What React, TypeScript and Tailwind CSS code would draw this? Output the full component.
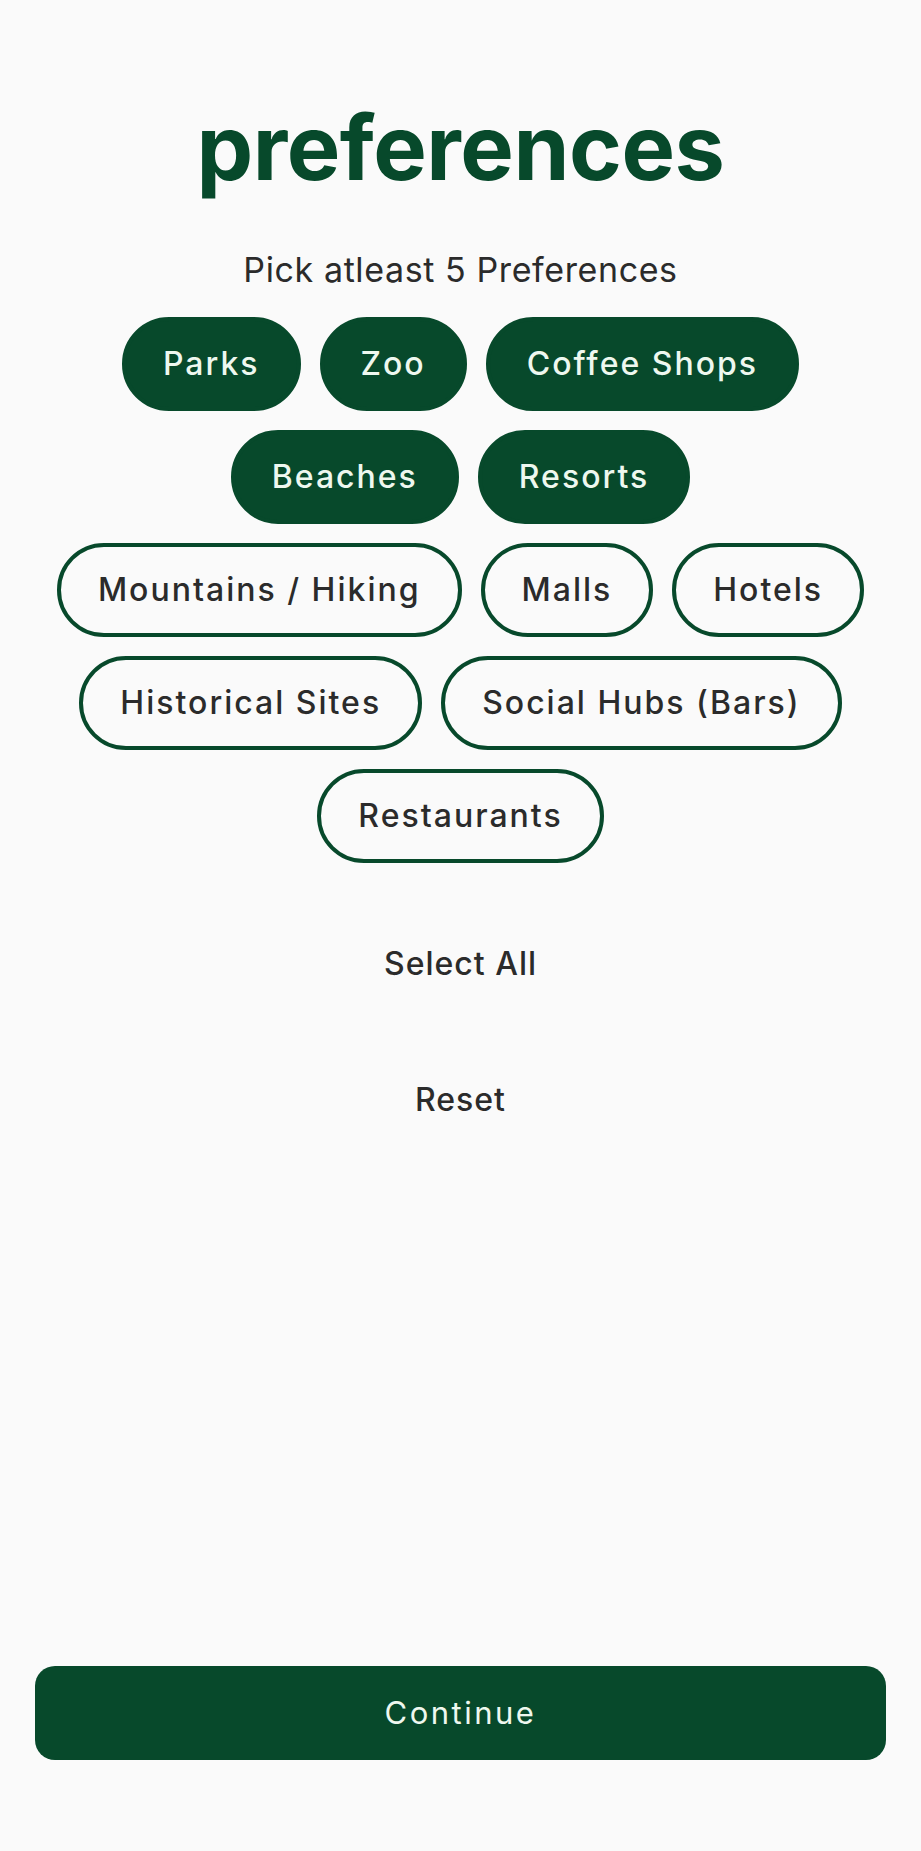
import React, { useState } from 'react';

const ROWS: string[][] = [
  ['Parks', 'Zoo', 'Coffee Shops'],
  ['Beaches', 'Resorts'],
  ['Mountains / Hiking', 'Malls', 'Hotels'],
  ['Historical Sites', 'Social Hubs (Bars)'],
  ['Restaurants'],
];

const ALL = ROWS.flat();

const Chip: React.FC<{ label: string; active: boolean; onClick: () => void }> = ({ label, active, onClick }) => (
  <button
    onClick={onClick}
    className={`h-[94px] rounded-full border-[4px] border-[#07492b] px-[37px] text-[32px] font-medium tracking-[2px] ${
      active ? 'bg-[#07492b] text-[#eef8ef]' : 'bg-transparent text-[#2b2b2b]'
    }`}
  >
    {label}
  </button>
);

export default function App() {
  const [selected, setSelected] = useState<string[]>(['Parks', 'Zoo', 'Coffee Shops', 'Beaches', 'Resorts']);

  const toggle = (label: string) =>
    setSelected((s) => (s.includes(label) ? s.filter((x) => x !== label) : [...s, label]));

  return (
    <div
      className="min-h-[1851px] bg-[#fafafa] flex flex-col items-center"
      style={{ fontFamily: 'Inter, "Noto Sans", sans-serif' }}
    >
      <h1 className="mt-[93px] text-[90px] leading-[110px] font-bold tracking-[-0.5px] text-[#07492b]">
        preferences
      </h1>

      <p className="mt-[47px] text-[34px] leading-[40px] tracking-[0.6px] text-[#2b2b2b]">
        Pick atleast 5 Preferences
      </p>

      <div className="mt-[27px] flex flex-col items-center gap-[19px]">
        {ROWS.map((row, i) => (
          <div key={i} className="flex gap-[19px]">
            {row.map((label) => (
              <Chip key={label} label={label} active={selected.includes(label)} onClick={() => toggle(label)} />
            ))}
          </div>
        ))}
      </div>

      <button
        onClick={() => setSelected(ALL)}
        className="mt-[81px] text-[32px] leading-[40px] font-medium tracking-[1px] text-[#2b2b2b]"
      >
        Select All
      </button>

      <button
        onClick={() => setSelected([])}
        className="mt-[96px] text-[32px] leading-[40px] font-medium tracking-[1px] text-[#2b2b2b]"
      >
        Reset
      </button>

      <div className="mt-auto w-full px-[35px] pb-[91px]">
        <button className="w-full h-[94px] rounded-[20px] bg-[#07492b] text-[31px] tracking-[2.5px] text-[#eef8ef]">
          Continue
        </button>
      </div>
    </div>
  );
}
